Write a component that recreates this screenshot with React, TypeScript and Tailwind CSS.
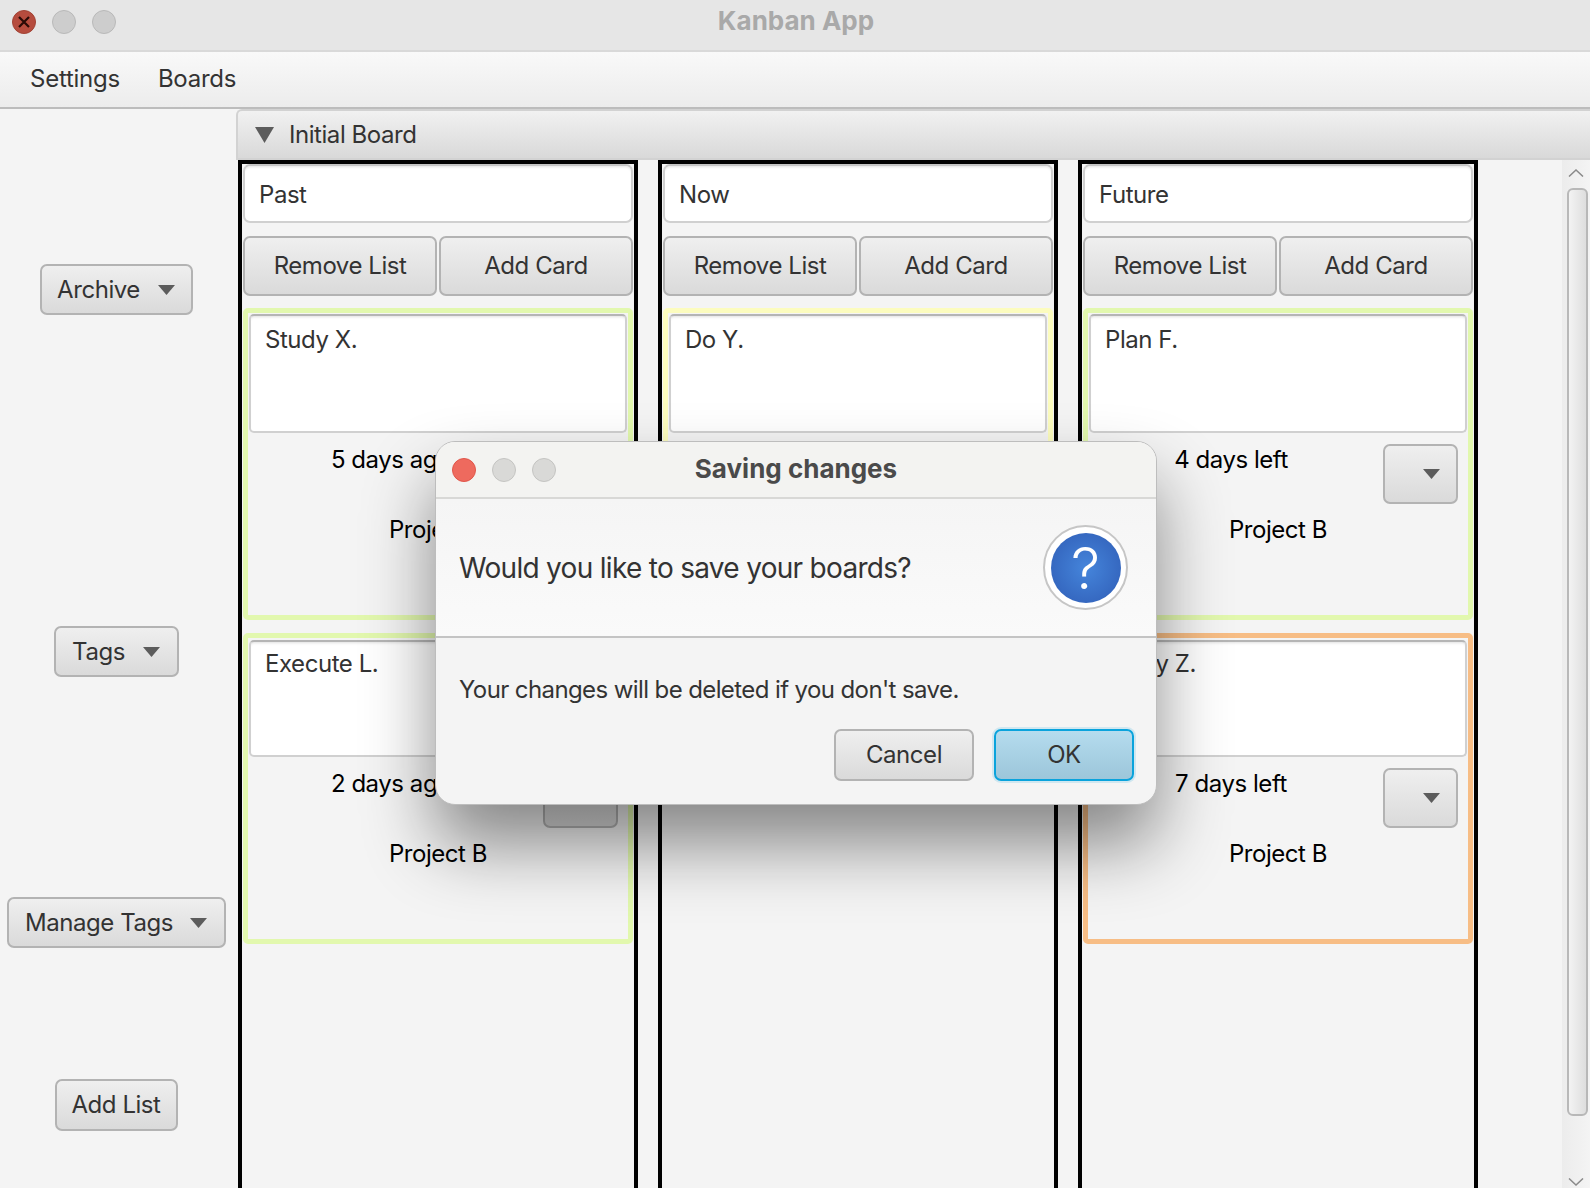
import React from "react";

const btn =
  "flex items-center justify-center rounded-[7px] border-2 border-[#b3b3b3] bg-gradient-to-b from-[#efefef] to-[#dadada] text-[#333333] text-[24px] tracking-[-0.45px] leading-none";

function Tri({ className }: { className: string }) {
  return (
    <svg className={className} viewBox="0 0 17 10">
      <path d="M0 0H17L8.5 10Z" fill="#5c5c5c" />
    </svg>
  );
}

function Light({ className }: { className: string }) {
  return <div className={"h-6 w-6 rounded-full border " + className} />;
}

function Card({
  text,
  time,
  edge,
  height,
  area,
}: {
  text: string;
  time?: string;
  edge: string;
  height: string;
  area: string;
}) {
  return (
    <div className={"w-full rounded-[5px] border-[5px] px-px " + edge + " " + height}>
      <div className={"rounded-[5px] border-2 border-[#d0d0d0] border-t-[#b5b5b5] bg-white pl-[14px] text-[24px] leading-[30px] tracking-[-0.45px] text-[#333333] shadow-[inset_0_3px_3px_-2px_rgba(0,0,0,0.12)] " + area}>
        {text}
      </div>
      {time && (
        <>
          <div className="mt-[11px] flex">
            <div className="flex-1 pr-[10px] pt-px text-center text-[24px] leading-[30px] tracking-[-0.45px] text-black">{time}</div>
            <div className="mr-[9px] flex h-[60px] w-[75px] items-center justify-end rounded-[7px] border-2 border-[#b3b3b3] bg-gradient-to-b from-[#efefef] to-[#dadada] pr-[16px]">
              <Tri className="h-[10px] w-[17px]" />
            </div>
          </div>
          <div className="mt-[11px] text-center text-[24px] leading-[30px] tracking-[-0.45px] text-black">Project B</div>
        </>
      )}
    </div>
  );
}

function Column({ name, children }: { name: string; children: React.ReactNode }) {
  return (
    <div className="flex h-[1028px] w-[400px] flex-col border-x-4 border-t-4 border-black px-px">
      <div className="flex h-[59px] items-center rounded-[7px] border-2 border-[#d0d0d0] border-t-[#c4c4c4] bg-white pl-[14px] pt-[2px] text-[24px] tracking-[-0.45px] text-[#333333] shadow-[inset_0_3px_3px_-2px_rgba(0,0,0,0.12)]">
        {name}
      </div>
      <div className="mt-[13px] flex gap-[2px]">
        <div className={btn + " h-[60px] flex-1"}>Remove List</div>
        <div className={btn + " h-[60px] flex-1"}>Add Card</div>
      </div>
      <div className="mt-[12px] flex flex-col gap-[13px]">{children}</div>
    </div>
  );
}

export default function App() {
  return (
    <div className="relative h-[1188px] w-[1590px] overflow-hidden bg-[#f4f4f4] font-[Inter,sans-serif]">
      {/* Window title bar */}
      <div className="relative flex h-[52px] items-center gap-4 border-b-2 border-[#d9d9d9] bg-[#e6e6e6] pb-[6px] pl-3">
        <div className="flex h-6 w-6 items-center justify-center rounded-full border border-[#a24335] bg-[#b64c3e]">
          <svg className="h-[14px] w-[14px]" viewBox="0 0 14 14">
            <path d="M2 2L12 12M12 2L2 12" stroke="#2a0a06" strokeWidth="2.2" />
          </svg>
        </div>
        <Light className="border-[#b9b9b9] bg-[#cdcdcd]" />
        <Light className="border-[#b9b9b9] bg-[#cdcdcd]" />
        <div className="flex-1 pb-[3px] pr-[130px] text-center text-[26px] font-bold text-[#a9a9a9]">Kanban App</div>
      </div>

      {/* Menu bar */}
      <div className="flex h-[57px] items-center gap-[38px] border-b-2 border-[#bcbcbc] bg-gradient-to-b from-[#f9f9f9] to-[#ececec] pb-[2px] pl-[30px] text-[24px] tracking-[-0.25px] text-[#333333]">
        <span>Settings</span>
        <span>Boards</span>
      </div>

      <div className="flex">
        {/* Sidebar */}
        <div className="mr-[4px] flex w-[232px] flex-col items-center">
          <div className={btn + " mt-[155px] h-[51px] w-[153px] gap-[18px]"}>
            Archive
            <Tri className="h-[10px] w-[17px]" />
          </div>
          <div className={btn + " mt-[311px] h-[51px] w-[125px] gap-[18px]"}>
            Tags
            <Tri className="h-[10px] w-[17px]" />
          </div>
          <div className={btn + " mt-[220px] h-[51px] w-[219px] gap-[17px]"}>
            Manage Tags
            <Tri className="h-[10px] w-[17px]" />
          </div>
          <div className={btn + " mt-[131px] h-[52px] w-[123px]"}>Add List</div>
        </div>

        {/* Main */}
        <div className="flex-1">
          <div className="flex h-[51px] items-center gap-[15px] rounded-tl-[6px] border-b-2 border-l-2 border-t-2 border-[#d2d2d2] bg-gradient-to-b from-[#f1f1f1] to-[#d9d9d9] pl-[17px] text-[24px] tracking-[-0.45px] text-[#333333]">
            <svg className="h-[16px] w-[19px]" viewBox="0 0 19 16">
              <path d="M0 0H19L9.5 16Z" fill="#5c5c5c" />
            </svg>
            Initial Board
          </div>
          <div className="flex pl-[2px]">
            <div className="flex flex-1 gap-5">
              <Column name="Past">
                <Card text="Study X." time="5 days ago" edge="border-[#e2f8ae] bg-[#f4f4f4]" height="h-[312px]" area="h-[119px] mt-px pt-[9px]" />
                <Card text="Execute L." time="2 days ago" edge="border-[#e2f8ae] bg-[#f4f4f4]" height="h-[311px]" area="h-[117px] mt-[2px] pt-[7px]" />
              </Column>
              <Column name="Now">
                <Card text="Do Y." edge="border-[#fcfcbe] bg-[#f4f4f4]" height="h-[312px]" area="h-[119px] mt-px pt-[9px]" />
              </Column>
              <Column name="Future">
                <Card text="Plan F." time="4 days left" edge="border-[#e2f8ae] bg-[#f4f4f4]" height="h-[312px]" area="h-[119px] mt-px pt-[9px]" />
                <Card text="Study Z." time="7 days left" edge="border-[#f7bd85] bg-[#f4f4f4]" height="h-[311px]" area="h-[117px] mt-[2px] pt-[7px]" />
              </Column>
            </div>
            {/* Scrollbar */}
            <div className="flex h-[1028px] w-[28px] flex-col items-center bg-gradient-to-r from-[#ececec] to-[#f4f4f4]">
              <svg className="mt-[9px] h-[8px] w-[16px]" viewBox="0 0 16 8">
                <path d="M1 7.5L8 1L15 7.5" fill="none" stroke="#8a8a8a" strokeWidth="1.5" />
              </svg>
              <div className="ml-[2px] mt-[11px] h-[928px] w-[21px] rounded-[6px] border-2 border-[#b8b8b8] bg-gradient-to-r from-[#f3f3f3] to-[#dedede]" />
              <svg className="mt-[62px] h-[8px] w-[16px]" viewBox="0 0 16 8">
                <path d="M1 0.5L8 7L15 0.5" fill="none" stroke="#8a8a8a" strokeWidth="1.5" />
              </svg>
            </div>
          </div>
        </div>
      </div>

      {/* Dialog */}
      <div className="absolute left-[435px] top-[441px] flex h-[364px] w-[722px] flex-col overflow-hidden rounded-[20px] border border-[#bdbdbd] bg-[#f4f4f4] shadow-[0_40px_70px_0_rgba(0,0,0,0.45)]">
        <div className="flex h-[57px] items-center gap-4 border-b-2 border-[#d8d8d6] bg-[#f3f3f1] pl-[16px]">
          <Light className="border-[#e0564a] bg-[#ee6a5e]" />
          <Light className="border-[#c4c4c2] bg-[#d9d9d7]" />
          <Light className="border-[#c4c4c2] bg-[#d9d9d7]" />
          <div className="flex-1 pb-[2px] pr-[136px] text-center text-[26px] font-bold text-[#4a4a4a]">Saving changes</div>
        </div>
        <div className="flex h-[139px] items-center justify-between border-b-2 border-[#c4c4c4] bg-gradient-to-b from-[#f5f5f5] to-[#fafafa] pl-[23px] pr-[28px]">
          <span className="text-[28px] tracking-[-0.7px] text-[#333333]">Would you like to save your boards?</span>
          <div className="flex h-[85px] w-[85px] items-center justify-center rounded-full border-2 border-[#c6c6c6] bg-white">
            <div className="flex h-[70px] w-[70px] items-center justify-center rounded-full bg-[radial-gradient(circle,#4585db,#2f5cb5)] text-[58px] font-light leading-none text-white">
              ?
            </div>
          </div>
        </div>
        <div className="flex flex-1 flex-col pl-[23px] pr-[22px]">
          <div className="mt-[37px] text-[24px] leading-[30px] tracking-[-0.6px] text-[#333333]">Your changes will be deleted if you don't save.</div>
          <div className="mt-[24px] flex justify-end gap-5">
            <div className={btn + " h-[52px] w-[140px]"}>Cancel</div>
            <div className="flex h-[52px] w-[140px] items-center justify-center rounded-[7px] border-2 border-[#0aa3dc] bg-gradient-to-b from-[#b5dcee] to-[#9cc6da] text-[24px] leading-none tracking-[-0.45px] text-[#333333] shadow-[0_0_0_2px_rgba(10,163,220,0.15)]">
              OK
            </div>
          </div>
        </div>
      </div>
    </div>
  );
}
